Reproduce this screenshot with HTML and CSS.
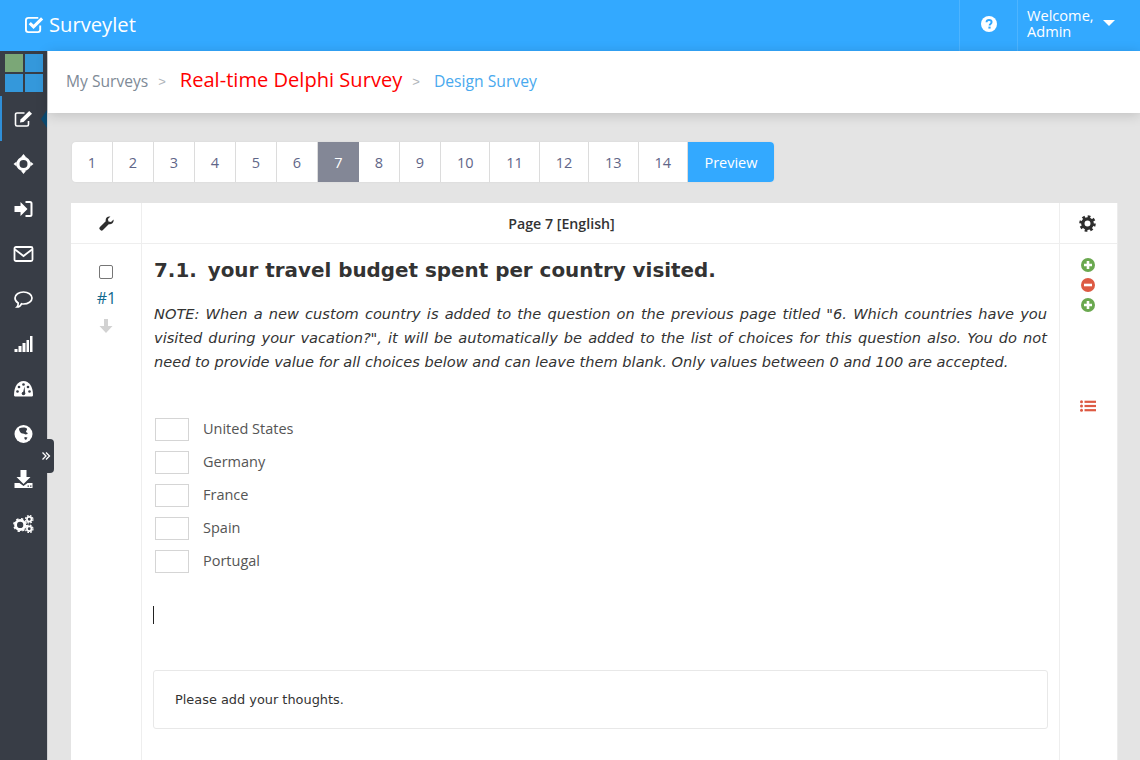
FILE: index.html
```html
<!DOCTYPE html>
<html lang="en">
<head>
    <meta charset="UTF-8">
    <title>Surveylet - Design Survey</title>
    <link rel="stylesheet" href="styles.css">
</head>
<body>
<header class="topbar">
    <a class="brand">
        <svg class="brand-icon" viewBox="0 0 20 20"><path d="M16 11v4.500a2.500 2.500 0 0 1-2.500 2.500h-10A2.500 2.500 0 0 1 1 15.500v-10A2.500 2.500 0 0 1 3.500 3H14" fill="none" stroke="#fff" stroke-width="2"/><path d="M5 8.500l4 4 9-9" fill="none" stroke="#fff" stroke-width="3.200"/></svg>
        <span>Surveylet</span>
    </a>
    <div class="top-right">
        <div class="top-help">
            <svg viewBox="0 0 16 16" class="help-icon"><circle cx="8" cy="8" r="8" fill="#fff"/><path d="M5.500 6.200C5.600 4.700 6.700 4 8 4c1.500 0 2.600.8 2.600 2.100 0 1.900-2 1.800-2 3.300" fill="none" stroke="#33a9ff" stroke-width="1.900"/><rect x="7.400" y="10.600" width="2.200" height="2" fill="#33a9ff"/></svg>
        </div>
        <div class="top-user">
            <span class="user-name">Welcome,<br>Admin</span>
            <i class="caret"></i>
        </div>
    </div>
</header>

<div class="layout">
    <nav class="sidebar">
        <div class="tiles">
            <i class="tile-green"></i><i></i><i></i><i></i>
        </div>
        <a class="side-item active">
            <svg viewBox="0 0 20 20"><path d="M11 4H3.500A1.500 1.500 0 0 0 2 5.500v10A1.500 1.500 0 0 0 3.500 17h10a1.500 1.500 0 0 0 1.500-1.500V12" fill="none" stroke="#fff" stroke-width="1.600"/><path d="M6.500 13.500l.5-3L15.700 2 18.500 4.800 10 13z" fill="#fff"/></svg>
        </a>
        <a class="side-item">
            <svg viewBox="0 0 20 20"><path d="M10 0l2.600 3.200H7.400zM10 20l-2.600-3.200h5.200zM0 10l3.200-2.600v5.200zM20 10l-3.200 2.600V7.400z" fill="#fff"/><circle cx="10" cy="10" r="5.600" fill="none" stroke="#fff" stroke-width="3.200"/></svg>
        </a>
        <a class="side-item">
            <svg viewBox="0 0 20 20"><path d="M1 7h6V3l7 7-7 7v-4H1z" fill="#fff"/><path d="M12 3h4.500A1.500 1.500 0 0 1 18 4.500v11a1.500 1.500 0 0 1-1.500 1.500H12" fill="none" stroke="#fff" stroke-width="2"/></svg>
        </a>
        <a class="side-item">
            <svg viewBox="0 0 20 20"><rect x="1" y="3" width="18" height="14" rx="1.500" fill="none" stroke="#fff" stroke-width="1.800"/><path d="M1.500 5.500L10 12l8.500-6.500" fill="none" stroke="#fff" stroke-width="1.800"/></svg>
        </a>
        <a class="side-item">
            <svg viewBox="0 0 20 20"><path d="M10 3c4.700 0 8.500 2.600 8.500 6s-3.800 6-8.500 6c-.7 0-1.300 0-2-.2C7 17 5 18 3.500 18c1-1 1.300-2.400 1.200-4C2.700 12.900 1.500 11 1.500 9c0-3.400 3.800-6 8.500-6z" fill="none" stroke="#fff" stroke-width="1.700"/></svg>
        </a>
        <a class="side-item">
            <svg viewBox="0 0 20 20" fill="#fff"><rect x="1" y="15" width="3" height="3"/><rect x="5" y="12" width="3" height="6"/><rect x="9" y="9" width="3" height="9"/><rect x="13" y="6" width="2.500" height="12"/><rect x="16.500" y="2" width="2.500" height="16"/></svg>
        </a>
        <a class="side-item">
            <svg viewBox="0 0 20 20"><path d="M0.500 16C0.500 7.500 4.500 2 10 2s9.500 5.500 9.500 14c0 .7-.3 1.500-1 1.500h-17c-.7 0-1-.8-1-1.500z" fill="#fff"/><path d="M9.300 14.500l1.700-7 .7 7z" fill="#383d46"/><circle cx="10" cy="14.500" r="1.800" fill="#383d46"/><circle cx="4" cy="12.500" r="1.300" fill="#383d46"/><circle cx="5.500" cy="8" r="1.300" fill="#383d46"/><circle cx="10" cy="5.500" r="1.300" fill="#383d46"/><circle cx="14.500" cy="8" r="1.300" fill="#383d46"/><circle cx="16" cy="12.500" r="1.300" fill="#383d46"/></svg>
        </a>
        <a class="side-item">
            <svg viewBox="0 0 20 20"><circle cx="10" cy="10" r="9" fill="#fff"/><path d="M5.500 4.500C8 3 12 3 13.500 4.500c.5 1.500-1 2-1 3.500 1 1 2 .5 1.500 2l-2 .5C10 9 8 10 7 8.500 6 7 5.500 6 5.500 4.500zM11 13l3 .5L12.500 16 11 15z" fill="#383d46"/></svg>
        </a>
        <a class="side-item">
            <svg viewBox="0 0 20 20"><path d="M7 1h6v7h4l-7 7-7-7h4z" fill="#fff"/><path d="M1 14h5l4 3 4-3h5v5H1z" fill="#fff"/><rect x="14" y="16.500" width="1.500" height="1.200" fill="#383d46"/><rect x="16.500" y="16.500" width="1.500" height="1.200" fill="#383d46"/></svg>
        </a>
        <a class="side-item">
            <svg viewBox="0 0 22 20"><circle cx="7.500" cy="11" r="4.800" fill="none" stroke="#fff" stroke-width="3"/><circle cx="7.500" cy="11" r="6.600" fill="none" stroke="#fff" stroke-width="1.600" stroke-dasharray="2.500 2.700"/><circle cx="17" cy="5" r="2.400" fill="none" stroke="#fff" stroke-width="1.800"/><circle cx="17" cy="5" r="3.900" fill="none" stroke="#fff" stroke-width="1.300" stroke-dasharray="1.800 1.300"/><circle cx="17" cy="15" r="2.400" fill="none" stroke="#fff" stroke-width="1.800"/><circle cx="17" cy="15" r="3.900" fill="none" stroke="#fff" stroke-width="1.300" stroke-dasharray="1.800 1.300"/></svg>
        </a>
        <a class="side-toggle">
            <svg viewBox="0 0 10 10"><path d="M1.500 1.500L5 5 1.500 8.500M5 1.500L8.500 5 5 8.500" fill="none" stroke="#fff" stroke-width="1.300"/></svg>
        </a>
    </nav>

    <main class="content">
        <div class="crumbs">
            <a class="crumb-muted">My Surveys</a>
            <span class="crumb-sep first">&gt;</span>
            <a class="crumb-title">Real-time Delphi Survey</a>
            <span class="crumb-sep">&gt;</span>
            <a class="crumb-link">Design Survey</a>
        </div>

        <div class="page-body">
            <ul class="pager">
                <li>1</li><li>2</li><li>3</li><li>4</li><li>5</li><li>6</li><li class="current">7</li>
                <li>8</li><li>9</li><li>10</li><li>11</li><li>12</li><li>13</li><li>14</li>
                <li class="preview">Preview</li>
            </ul>

            <section class="sheet">
                <div class="sheet-head">
                    <div class="col-left">
                        <svg class="head-icon" viewBox="0 0 16 16"><path d="M15.500 3.800c.3 1.700-.1 3-1.200 4-1.100 1-2.400 1.300-3.900 1L4.200 15a1.900 1.900 0 0 1-2.700 0l-.5-.5a1.900 1.900 0 0 1 0-2.700l6.200-6.200c-.3-1.500 0-2.800 1-3.900 1-1.100 2.300-1.500 4-1.200L9.500 3.200l.6 2.700 2.700.6z" fill="#2e2e2e"/></svg>
                    </div>
                    <div class="col-main head-title">Page 7 [English]</div>
                    <div class="col-right head-gear">
                        <svg class="head-icon gear" viewBox="0 0 20 20"><circle cx="10" cy="10" r="5.500" fill="none" stroke="#2e2e2e" stroke-width="4"/><circle cx="10" cy="10" r="8" fill="none" stroke="#2e2e2e" stroke-width="3.500" stroke-dasharray="3.100 3.180"/></svg>
                    </div>
                </div>
                <div class="sheet-row">
                    <div class="col-left question-side">
                        <span class="fake-check"></span>
                        <span class="q-index">#1</span>
                        <svg class="q-down" viewBox="0 0 14 14"><path d="M5 0h4v7h4.500L7 14 .5 7H5z" fill="#d2d2d2"/></svg>
                    </div>
                    <div class="col-main question">
                        <h2><span class="q-num">7.1.</span> your travel budget spent per country visited.</h2>
                        <p class="note">NOTE: When a new custom country is added to the question on the previous page titled "6. Which countries have you visited during your vacation?", it will be automatically be added to the list of choices for this question also. You do not need to provide value for all choices below and can leave them blank. Only values between 0 and 100 are accepted.</p>
                        <div class="choices">
                            <label class="choice"><span class="box"></span>United States</label>
                            <label class="choice"><span class="box"></span>Germany</label>
                            <label class="choice"><span class="box"></span>France</label>
                            <label class="choice"><span class="box"></span>Spain</label>
                            <label class="choice"><span class="box"></span>Portugal</label>
                        </div>
                        <div class="cursor"></div>
                        <div class="thoughts">Please add your thoughts.</div>
                    </div>
                    <div class="col-right tools">
                        <svg viewBox="0 0 14 14"><circle cx="7" cy="7" r="7" fill="#6aa84f"/><path d="M5.700 3h2.600v2.700H11v2.600H8.300V11H5.700V8.300H3V5.700h2.700z" fill="#fff"/></svg>
                        <svg viewBox="0 0 14 14"><circle cx="7" cy="7" r="7" fill="#dd5a43"/><rect x="3" y="5.700" width="8" height="2.600" fill="#fff"/></svg>
                        <svg viewBox="0 0 14 14"><circle cx="7" cy="7" r="7" fill="#6aa84f"/><path d="M5.700 3h2.600v2.700H11v2.600H8.300V11H5.700V8.300H3V5.700h2.700z" fill="#fff"/></svg>
                        <svg class="tool-list" viewBox="0 0 16 12" fill="#dd5a43"><circle cx="1.500" cy="1.800" r="1.500"/><circle cx="1.500" cy="6" r="1.500"/><circle cx="1.500" cy="10.200" r="1.500"/><rect x="4.500" y=".7" width="11.500" height="2.200"/><rect x="4.500" y="4.900" width="11.500" height="2.200"/><rect x="4.500" y="9.100" width="11.500" height="2.200"/></svg>
                    </div>
                </div>
            </section>
        </div>
    </main>
</div>
</body>
</html>
```

FILE: styles.css
```css
* {
    box-sizing: border-box;
}

html, body {
    height: 760px;
    overflow: hidden;
}

body {
    margin: 0;
    font-family: "Open Sans", sans-serif;
    font-size: 14px;
    color: #333;
    background-color: #e4e4e4;
}

.topbar {
    display: flex;
    justify-content: space-between;
    height: 51px;
    background-color: #33a9ff;
    color: #fff;
}

.brand {
    display: flex;
    align-items: center;
    gap: 5px;
    padding: 0 0 3px 25px;
    font-size: 20.200px;
}

.brand-icon {
    width: 19px;
    height: 19px;
}

.top-right {
    display: flex;
}

.top-help {
    display: flex;
    align-items: center;
    justify-content: center;
    width: 58px;
    padding: 0 0 3px;
    border-left: 1px solid #4db4ff;
}

.help-icon {
    width: 16px;
    height: 16px;
}

.top-user {
    display: flex;
    align-items: center;
    width: 123px;
    padding: 0 0 5px 9px;
    border-left: 1px solid #4db4ff;
    font-size: 14.600px;
    line-height: 16px;
}

.user-name {
    width: 76px;
}

.caret {
    border-top: 6px solid #fff;
    border-left: 6px solid transparent;
    border-right: 6px solid transparent;
}

.layout {
    display: flex;
    height: 709px;
}

.sidebar {
    position: relative;
    flex: none;
    width: 48px;
    background-color: #383d46;
    border-right: 1px solid #cfd0d2;
}

.tiles {
    display: grid;
    grid-template-columns: 18px 18px;
    grid-auto-rows: 18px;
    gap: 2px;
    padding: 3px 0 0 5px;
    height: 45px;
}

.tiles i {
    background-color: #3498db;
}

.tiles .tile-green {
    background-color: #7ba777;
}

.side-item {
    position: relative;
    display: flex;
    align-items: center;
    justify-content: center;
    height: 45px;
    padding-top: 1px;
}

.side-item svg {
    width: 21px;
    height: 20px;
}

.side-item.active::before {
    content: "";
    position: absolute;
    left: 0;
    top: 0;
    width: 2px;
    height: 45px;
    background-color: #2f8fd8;
}

.side-item.active::after {
    content: "";
    position: absolute;
    right: 0;
    top: 14px;
    border-top: 9px solid transparent;
    border-bottom: 9px solid transparent;
    border-right: 6px solid #0b4a70;
}

.side-toggle {
    position: absolute;
    left: 38px;
    top: 388px;
    display: flex;
    align-items: center;
    justify-content: center;
    width: 16px;
    height: 34px;
    background-color: #383d46;
    border-radius: 0 4px 4px 0;
}

.side-toggle svg {
    width: 10px;
    height: 10px;
}

.content {
    flex: 1;
    min-width: 0;
}

.crumbs {
    position: relative;
    display: flex;
    align-items: center;
    height: 62px;
    padding: 0 0 2px 18px;
    background-color: #fff;
    box-shadow: 0 2px 12px rgba(0, 0, 0, 0.16);
}

.crumb-muted {
    font-size: 15.600px;
    color: #7e8a96;
}

.crumb-sep {
    margin: 0 14px 0 10px;
    font-size: 13px;
    color: #b0b5ba;
    font-family: "Liberation Sans", sans-serif;
}

.crumb-sep.first {
    margin-right: 14px;
}

.crumb-title {
    margin-bottom: 3px;
    font-size: 20.100px;
    color: #ff0000;
}

.crumb-link {
    font-size: 15.700px;
    color: #49a9ee;
}

.page-body {
    padding: 29px 22px 0 23px;
}

.pager {
    display: inline-flex;
    height: 40px;
    margin: 0 0 21px 1px;
    padding: 0;
    list-style: none;
    background-color: #fff;
    border-radius: 4px;
    color: #5f6688;
    font-size: 14.500px;
    box-shadow: 0 0 2px rgba(0, 0, 0, 0.08);
}

.pager li {
    display: flex;
    align-items: center;
    justify-content: center;
    width: 41px;
    border-right: 1px solid #dcdcdc;
}

.pager li:nth-child(n+10) {
    width: 49.400px;
}

.pager li.current {
    background-color: #838796;
    border-right: none;
    color: #fff;
}

.pager li.preview {
    width: 86px;
    background-color: #33a9ff;
    border-right: none;
    border-radius: 0 4px 4px 0;
    color: #fff;
}

.sheet {
    width: 1047px;
    background-color: #fff;
    border-right: 1px solid #ececec;
}

.sheet-head {
    display: flex;
    height: 41px;
    border-bottom: 1px solid #eee;
}

.sheet-row {
    display: flex;
    height: 516px;
}

.col-left {
    flex: none;
    width: 71px;
    border-right: 1px solid #eee;
}

.col-main {
    flex: 1;
    min-width: 0;
}

.col-right {
    flex: none;
    width: 58px;
    border-left: 1px solid #eee;
}

.sheet-head .col-left, .sheet-head .col-right {
    display: flex;
    align-items: center;
    justify-content: center;
}

.sheet-head .head-gear {
    padding-right: 3px;
}

.head-icon {
    width: 15px;
    height: 15px;
}

.gear {
    width: 17px;
    height: 17px;
}

.head-title {
    align-self: center;
    padding: 1px 78px 0 0;
    text-align: center;
    font-weight: 600;
    font-size: 14.200px;
    color: #333;
}

.question-side {
    display: flex;
    flex-direction: column;
    align-items: center;
    padding-top: 21px;
}

.fake-check {
    width: 14px;
    height: 14px;
    border: 1px solid #767676;
    border-radius: 2px;
}

.q-index {
    margin-top: 8px;
    padding-left: 1px;
    font-size: 16px;
    line-height: 22px;
    color: #11698e;
}

.q-down {
    width: 14px;
    height: 14px;
    margin-top: 10px;
}

.question {
    padding: 0 11px;
}

.question h2 {
    margin: 15px 0 0 1px;
    font-family: "DejaVu Sans", sans-serif;
    font-size: 19.900px;
    line-height: 24px;
    font-weight: 700;
    color: #333;
}

.q-num {
    margin-right: 4px;
}

.note {
    margin: 19px 1px 0 1px;
    font-family: "DejaVu Sans", sans-serif;
    font-size: 14.600px;
    font-style: italic;
    line-height: 24px;
    text-align: justify;
    color: #333;
}

.choices {
    display: flex;
    flex-direction: column;
    gap: 10px;
    margin-top: 43px;
}

.choice {
    display: flex;
    align-items: center;
    height: 23px;
    padding-left: 2px;
    font-size: 14.500px;
    color: #555;
}

.box {
    width: 34px;
    height: 23px;
    margin: 2px 14px 0 0;
    border: 1px solid #d5d5d5;
}

.cursor {
    width: 1px;
    height: 18px;
    margin-top: 34px;
    background-color: #222;
}

.thoughts {
    display: flex;
    align-items: center;
    height: 59px;
    margin-top: 46px;
    padding-left: 21px;
    font-family: "DejaVu Sans", sans-serif;
    font-size: 12.900px;
    color: #333;
    border: 1px solid #e8e8e8;
    border-radius: 3px;
}

.tools {
    display: flex;
    flex-direction: column;
    align-items: center;
    gap: 6px;
    padding: 14px 2px 0 0;
}

.tools svg {
    width: 14px;
    height: 14px;
}

.tools .tool-list {
    width: 16px;
    height: 12px;
    margin-top: 82px;
}
```
